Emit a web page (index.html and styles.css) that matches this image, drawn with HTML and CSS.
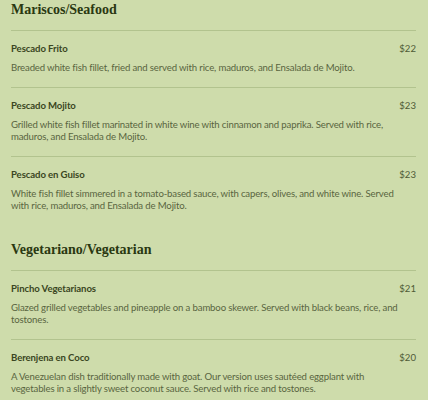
FILE: index.html
```html
<!DOCTYPE html>
<html lang="en">
<head>
<meta charset="utf-8">
<title>Menu</title>
<link rel="stylesheet" href="styles.css">
</head>
<body>
<main class="menu">
  <section class="menu-section">
    <h2 class="section-title">Mariscos/Seafood</h2>
    <ul class="items">
      <li class="item">
        <div class="item-head"><span class="item-name">Pescado Frito</span><span class="item-price">$22</span></div>
        <p class="item-desc">Breaded white fish fillet, fried and served with rice, maduros, and Ensalada de Mojito.</p>
      </li>
      <li class="item">
        <div class="item-head"><span class="item-name">Pescado Mojito</span><span class="item-price">$23</span></div>
        <p class="item-desc">Grilled white fish fillet marinated in white wine with cinnamon and paprika. Served with rice, maduros, and Ensalada de Mojito.</p>
      </li>
      <li class="item">
        <div class="item-head"><span class="item-name">Pescado en Guiso</span><span class="item-price">$23</span></div>
        <p class="item-desc">White fish fillet simmered in a tomato-based sauce, with capers, olives, and white wine. Served with rice, maduros, and Ensalada de Mojito.</p>
      </li>
    </ul>
  </section>
  <section class="menu-section">
    <h2 class="section-title">Vegetariano/Vegetarian</h2>
    <ul class="items">
      <li class="item">
        <div class="item-head"><span class="item-name">Pincho Vegetarianos</span><span class="item-price">$21</span></div>
        <p class="item-desc">Glazed grilled vegetables and pineapple on a bamboo skewer. Served with black beans, rice, and tostones.</p>
      </li>
      <li class="item">
        <div class="item-head"><span class="item-name">Berenjena en Coco</span><span class="item-price">$20</span></div>
        <p class="item-desc">A Venezuelan dish traditionally made with goat. Our version uses sautéed eggplant with vegetables in a slightly sweet coconut sauce. Served with rice and tostones.</p>
      </li>
    </ul>
  </section>
</main>
</body>
</html>
```

FILE: styles.css
```css
html, body {
  margin: 0;
  padding: 0;
  background: #cedcab;
}

.menu {
  padding: 0 12px 0 11px;
  font-family: Lato, "Open Sans", sans-serif;
}

.menu-section + .menu-section {
  margin-top: 15px;
}

.section-title {
  margin: 0 0 10px;
  font-family: "Liberation Serif", "Times New Roman", serif;
  font-weight: bold;
  font-size: 14px;
  line-height: 20px;
  color: #2a3811;
}

.items {
  list-style: none;
  margin: 0;
  padding: 0;
}

.item {
  border-top: 1px solid #b2c38e;
  padding: 11px 0 13px;
}

.item-head {
  display: flex;
  justify-content: space-between;
  align-items: center;
  line-height: 14px;
}

.item-name {
  font-size: 9.6px;
  letter-spacing: -0.1px;
  font-weight: bold;
  color: #3a4622;
}

.item-price {
  font-size: 9.6px;
  color: #4f5b36;
}

.item-desc {
  margin: 6px 0 0;
  padding-right: 12px;
  font-size: 9.6px;
  letter-spacing: -0.15px;
  line-height: 12px;
  color: #59653f;
}
```
